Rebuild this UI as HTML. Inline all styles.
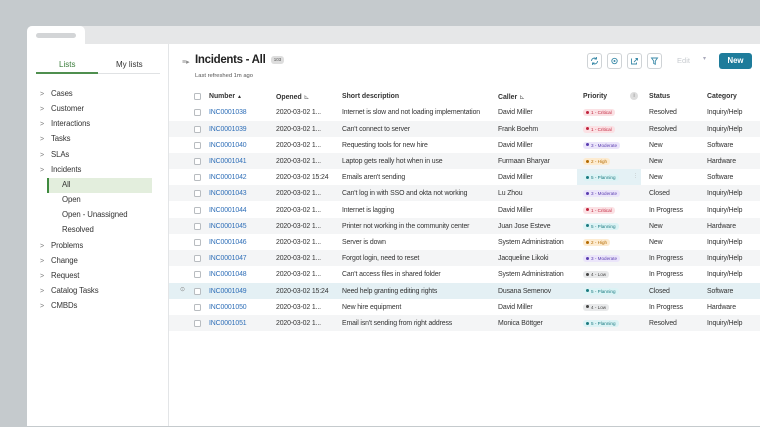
<!DOCTYPE html>
<html><head><meta charset="utf-8"><style>
*{margin:0;padding:0;box-sizing:border-box}
body{width:760px;height:427px;background:#c5cacd;font-family:"Liberation Sans",sans-serif;color:#2d2d2d;position:relative;overflow:hidden}
.a{position:absolute;white-space:nowrap}
.card{position:absolute;left:27px;top:26px;width:733px;height:400px;background:#fff;border-radius:5px 0 0 0;overflow:hidden}
.strip{position:absolute;left:0;top:0;width:733px;height:18px;background:#e6e7e8}
.tab{position:absolute;left:0;top:0;width:58px;height:19px;background:#fff;border-radius:5px 5px 0 0}
.pill{position:absolute;left:9px;top:7px;width:40px;height:5px;border-radius:3px;background:#d3d5d7}
.side{position:absolute;left:0;top:18px;width:142px;height:382px;border-right:1px solid #e3e5e7}
.si{position:absolute;font-size:7.8px;color:#333;letter-spacing:-0.1px}
.chev{position:absolute;font-size:7px;color:#777}
.row{position:absolute;left:169px;width:591px;height:16.2px}
.t{position:absolute;font-size:6.9px;letter-spacing:-0.12px;color:#333;white-space:nowrap}
.lnk{color:#2f6fb8}
.cb{position:absolute;left:194px;width:7px;height:7px;border:1px solid #b8bcc0;border-radius:1.5px;background:#fff}
.bd{position:absolute;left:583px;height:7px;border-radius:3px;font-size:4.6px;line-height:7px;padding:0 3px;white-space:nowrap}
.bd:before{content:"";display:inline-block;width:3px;height:3px;border-radius:50%;margin-right:2px;vertical-align:0.3px;background:currentColor}
.cr{background:#fbe1e4;color:#c0233c}.md{background:#ebe5fa;color:#5a3cb0}.hi{background:#fdebd0;color:#b46a00}.pl{background:#dcf3f5;color:#1b7a80}.lo{background:#e8e9ea;color:#444}
.btn{position:absolute;top:53px;width:15px;height:16px;border:1px solid #cfd3d6;border-radius:3px;background:#fff}
.h{position:absolute;font-size:6.9px;font-weight:bold;color:#333;white-space:nowrap;top:93px}
</style></head><body>
<div class="card">
<div class="strip"></div><div class="tab"><div class="pill"></div></div>
<div class="side"></div>
</div>
<div class="a" style="left:59px;top:60px;font-size:8px;color:#3a7c3a">Lists</div>
<div class="a" style="left:116px;top:60px;font-size:8px;color:#333">My lists</div>
<div class="a" style="left:36px;top:72px;width:62px;height:2px;background:#4f8f4f"></div>
<div class="a" style="left:98px;top:73px;width:62px;height:1px;background:#e0e2e4"></div>
<div class="a" style="left:47px;top:178px;width:105px;height:15px;background:#e3eedd;border-left:2px solid #3f8a3f"></div>

<div class="chev" style="left:40px;top:91px">&gt;</div><div class="si" style="left:51px;top:89px">Cases</div>
<div class="chev" style="left:40px;top:106px">&gt;</div><div class="si" style="left:51px;top:104px">Customer</div>
<div class="chev" style="left:40px;top:121px">&gt;</div><div class="si" style="left:51px;top:119px">Interactions</div>
<div class="chev" style="left:40px;top:136px">&gt;</div><div class="si" style="left:51px;top:134px">Tasks</div>
<div class="chev" style="left:40px;top:152px">&gt;</div><div class="si" style="left:51px;top:150px">SLAs</div>
<div class="chev" style="left:40px;top:167px">&gt;</div><div class="si" style="left:51px;top:165px">Incidents</div>
<div class="si" style="left:62px;top:180px">All</div>
<div class="si" style="left:62px;top:195px">Open</div>
<div class="si" style="left:62px;top:210px">Open - Unassigned</div>
<div class="si" style="left:62px;top:225px">Resolved</div>
<div class="chev" style="left:40px;top:243px">&gt;</div><div class="si" style="left:51px;top:241px">Problems</div>
<div class="chev" style="left:40px;top:258px">&gt;</div><div class="si" style="left:51px;top:256px">Change</div>
<div class="chev" style="left:40px;top:273px">&gt;</div><div class="si" style="left:51px;top:271px">Request</div>
<div class="chev" style="left:40px;top:288px">&gt;</div><div class="si" style="left:51px;top:286px">Catalog Tasks</div>
<div class="chev" style="left:40px;top:303px">&gt;</div><div class="si" style="left:51px;top:301px">CMBDs</div>

<div class="a" style="left:182px;top:58px;font-size:7px;color:#888">&#8801;&#9656;</div>
<div class="a" style="left:195px;top:54px;font-size:11.5px;font-weight:bold;color:#222;letter-spacing:-0.3px">Incidents - All</div>
<div class="a" style="left:271px;top:56px;width:13px;height:8px;border-radius:3px;background:#ddd;font-size:4.5px;line-height:8px;text-align:center;color:#555">103</div>
<div class="a" style="left:195px;top:73px;font-size:5.8px;color:#555">Last refreshed 1m ago</div>

<div class="btn" style="left:587px"><svg width="13" height="14" viewBox="0 0 13 14"><path d="M3.5 7a3 3 0 0 1 5-2.2M9.5 7a3 3 0 0 1-5 2.2M8.5 3v2h-2M4.5 11V9h2" fill="none" stroke="#3a8aa8" stroke-width="0.9"/></svg></div>
<div class="btn" style="left:607px"><svg width="13" height="14" viewBox="0 0 13 14"><circle cx="6.5" cy="7" r="2.7" fill="none" stroke="#3a8aa8" stroke-width="0.9"/><circle cx="6.5" cy="7" r="1" fill="#3a8aa8"/></svg></div>
<div class="btn" style="left:627px"><svg width="13" height="14" viewBox="0 0 13 14"><path d="M4 5h-0.5v5h5V8.5M6 8l3.5-3.5M7.5 4.5h2v2" fill="none" stroke="#3a8aa8" stroke-width="0.9"/></svg></div>
<div class="btn" style="left:647px"><svg width="13" height="14" viewBox="0 0 13 14"><path d="M3.5 4h6L7.3 7v3.3L5.7 9.5V7z" fill="none" stroke="#3a8aa8" stroke-width="0.9"/></svg></div>
<div class="a" style="left:668px;top:53px;width:31px;height:16px;font-size:7.5px;line-height:16px;text-align:center;color:#c8ccd0">Edit</div>
<div class="a" style="left:703px;top:55px;font-size:6px;color:#aab">&#9662;</div>
<div class="a" style="left:719px;top:53px;width:33px;height:16px;border-radius:3px;background:#1e7c9b;color:#fff;font-size:7.8px;font-weight:bold;line-height:16px;text-align:center">New</div>

<div class="cb" style="top:93px"></div>
<div class="h" style="left:209px">Number <span style="font-size:5px">&#9650;</span></div>
<div class="h" style="left:276px">Opened <span style="font-weight:normal;color:#777">&#8894;</span></div>
<div class="h" style="left:342px">Short description</div>
<div class="h" style="left:498px">Caller <span style="font-weight:normal;color:#777">&#8894;</span></div>
<div class="h" style="left:583px">Priority</div>
<div class="a" style="left:630px;top:92px;width:8px;height:8px;border-radius:50%;background:#ddd;font-size:5px;text-align:center;line-height:8px;color:#777">i</div>
<div class="h" style="left:649px">Status</div>
<div class="h" style="left:707px">Category</div>

<div class="row" style="top:120.5px;background:#f4f5f6"></div>
<div class="row" style="top:152.9px;background:#f4f5f6"></div>
<div class="row" style="top:185.3px;background:#f4f5f6"></div>
<div class="row" style="top:217.7px;background:#f4f5f6"></div>
<div class="row" style="top:250.1px;background:#f4f5f6"></div>
<div class="row" style="top:282.5px;background:#e4f0f4"></div>
<div class="row" style="top:314.9px;background:#f4f5f6"></div>
<div class="a" style="left:577px;top:169px;width:64px;height:16px;background:#e4f1f5"></div>
<div class="a" style="left:633px;top:173px;font-size:5px;color:#999">&#8942;</div>
<div class="a" style="left:180px;top:286px;font-size:6px;color:#888">&#8857;</div>

<div id="rows"></div>
<script>
var d=[
["INC0001038","2020-03-02 1...","Internet is slow and not loading implementation","David Miller","cr","1 - Critical","Resolved","Inquiry/Help"],
["INC0001039","2020-03-02 1...","Can't connect to server","Frank Boehm","cr","1 - Critical","Resolved","Inquiry/Help"],
["INC0001040","2020-03-02 1...","Requesting tools for new hire","David Miller","md","3 - Moderate","New","Software"],
["INC0001041","2020-03-02 1...","Laptop gets really hot when in use","Furmaan Bharyar","hi","2 - High","New","Hardware"],
["INC0001042","2020-03-02 15:24","Emails aren't sending","David Miller","pl","5 - Planning","New","Software"],
["INC0001043","2020-03-02 1...","Can't log in with SSO and okta not working","Lu Zhou","md","3 - Moderate","Closed","Inquiry/Help"],
["INC0001044","2020-03-02 1...","Internet is lagging","David Miller","cr","1 - Critical","In Progress","Inquiry/Help"],
["INC0001045","2020-03-02 1...","Printer not working in the community center","Juan Jose Esteve","pl","5 - Planning","New","Hardware"],
["INC0001046","2020-03-02 1...","Server is down","System Administration","hi","2 - High","New","Inquiry/Help"],
["INC0001047","2020-03-02 1...","Forgot login, need to reset","Jacqueline Likoki","md","3 - Moderate","In Progress","Inquiry/Help"],
["INC0001048","2020-03-02 1...","Can't access files in shared folder","System Administration","lo","4 - Low","In Progress","Inquiry/Help"],
["INC0001049","2020-03-02 15:24","Need help granting editing rights","Dusana Semenov","pl","5 - Planning","Closed","Software"],
["INC0001050","2020-03-02 1...","New hire equipment","David Miller","lo","4 - Low","In Progress","Hardware"],
["INC0001051","2020-03-02 1...","Email isn't sending from right address","Monica Böttger","pl","5 - Planning","Resolved","Inquiry/Help"]];
var h="";
d.forEach(function(r,i){var y=112.3+i*16.2;var ty=y-3;
h+='<div class="cb" style="top:'+(y-3)+'px"></div>';
h+='<div class="t lnk" style="left:209px;top:'+ty+'px">'+r[0]+'</div>';
h+='<div class="t" style="left:276px;top:'+ty+'px">'+r[1]+'</div>';
h+='<div class="t" style="left:342px;top:'+ty+'px">'+r[2]+'</div>';
h+='<div class="t" style="left:498px;top:'+ty+'px">'+r[3]+'</div>';
h+='<div class="bd '+r[4]+'" style="top:'+(y-3)+'px">'+r[5]+'</div>';
h+='<div class="t" style="left:649px;top:'+ty+'px">'+r[6]+'</div>';
h+='<div class="t" style="left:707px;top:'+ty+'px">'+r[7]+'</div>';});
document.getElementById("rows").innerHTML=h;
</script>
</body></html>
